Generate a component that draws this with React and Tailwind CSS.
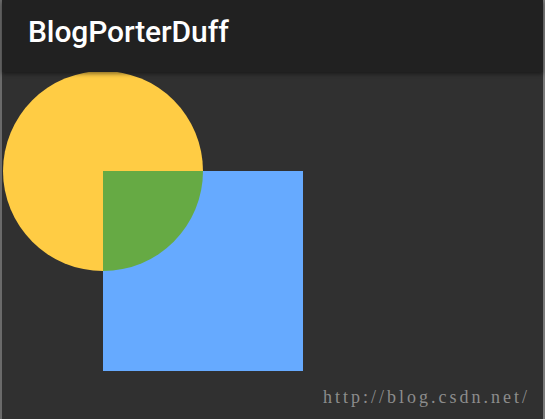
export default function App() {
  return (
    <div className="w-[545px] h-[419px] flex bg-[#303030] overflow-hidden">
      <div className="w-[2px] bg-[#6a6a6a]" />
      <div className="flex-1 flex flex-col relative">
        {/* App bar */}
        <div className="h-[72px] bg-[#212121] flex items-center pl-[26px] shadow-[0_2px_4px_rgba(0,0,0,0.45)] z-10">
          <h1 className="text-white text-[30px] font-medium tracking-[-0.1px] font-['Roboto',sans-serif] leading-none pb-[8px]">
            BlogPorterDuff
          </h1>
        </div>

        {/* Canvas */}
        <div className="flex-1 relative">
          <svg width="320" height="320" className="absolute left-0 top-0">
            <circle cx="101" cy="99" r="100" fill="#ffcc44" />
            <rect x="101" y="99" width="200" height="200" fill="#66aaff" />
            <path d="M101 99 H201 A100 100 0 0 1 101 199 Z" fill="#66aa44" />
          </svg>
          <span className="absolute left-[321px] top-[316px] text-[18px] tracking-[3px] text-[#8c8c8c] font-['Liberation_Serif',serif] leading-none">
            http://blog.csdn.net/
          </span>
        </div>
      </div>
      <div className="w-[2px] bg-[#7a7a7a]" />
    </div>
  );
}
